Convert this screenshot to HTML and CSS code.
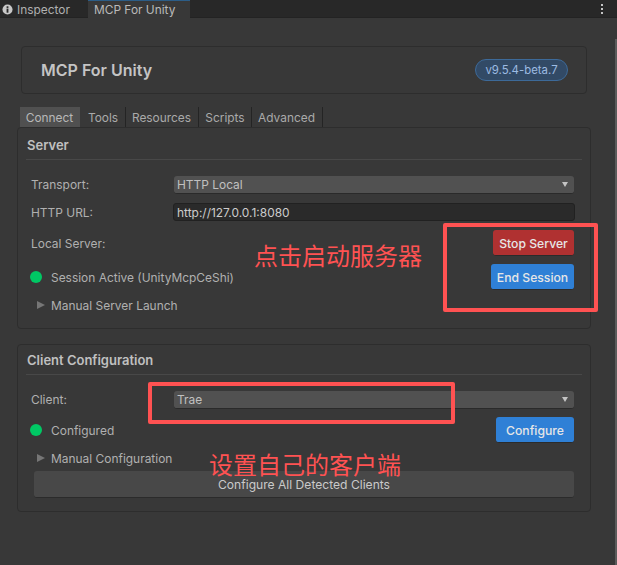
FILE: index.html
```html
<!DOCTYPE html>
<html lang="en">
<head>
<meta charset="utf-8">
<title>MCP For Unity</title>
<link rel="stylesheet" href="styles.css">
</head>
<body>
<div class="window">
  <div class="titlebar">
    <div class="dock-tab inspector">
      <svg class="info" viewBox="0 0 12 12" width="11" height="11"><circle cx="6" cy="6" r="5.5" fill="#c8c8c8"/><rect x="5" y="5" width="2" height="4.5" fill="#282828"/><rect x="5" y="2.5" width="2" height="1.8" fill="#282828"/></svg>
      <span>Inspector</span>
    </div>
    <div class="dock-tab active"><span>MCP For Unity</span></div>
    <div class="kebab"><i></i><i></i><i></i></div>
  </div>
  <div class="content">
    <div class="header-card">
      <div class="app-title">MCP For Unity</div>
      <div class="badge">v9.5.4-beta.7</div>
    </div>
    <div class="tabs">
      <div class="tab selected">Connect</div>
      <div class="tab t-tools">Tools</div>
      <div class="tab t-res">Resources</div>
      <div class="tab t-scr">Scripts</div>
      <div class="tab t-adv">Advanced</div>
    </div>
    <section class="panel server">
      <h2 class="panel-title">Server</h2>
      <div class="row r-transport">
        <div class="label">Transport:</div>
        <div class="select">HTTP Local<span class="caret"></span></div>
      </div>
      <div class="row r-url">
        <div class="label">HTTP URL:</div>
        <div class="input">http://127.0.0.1:8080</div>
      </div>
      <div class="row r-local">
        <div class="label">Local Server:</div>
        <div class="btn red">Stop Server</div>
      </div>
      <div class="row r-session">
        <div class="status"><span class="dot"></span>Session Active (UnityMcpCeShi)</div>
        <div class="btn blue">End Session</div>
      </div>
      <div class="foldout f-server"><span class="tri"></span>Manual Server Launch</div>
    </section>
    <section class="panel client">
      <h2 class="panel-title">Client Configuration</h2>
      <div class="row r-client">
        <div class="label">Client:</div>
        <div class="select">Trae<span class="caret"></span></div>
      </div>
      <div class="row r-configured">
        <div class="status"><span class="dot"></span>Configured</div>
        <div class="btn blue">Configure</div>
      </div>
      <div class="foldout f-client"><span class="tri"></span>Manual Configuration</div>
      <div class="wide-btn">Configure All Detected Clients</div>
    </section>
  </div>
  <div class="scrollbar"></div>
  <div class="mark box-server"></div>
  <div class="mark box-client"></div>
  <div class="note note-server">点击启动服务器</div>
  <div class="note note-client">设置自己的客户端</div>
</div>
</body>
</html>
```
FILE: styles.css
```css
* { box-sizing: border-box; }
html, body { margin: 0; padding: 0; }
body { width: 617px; height: 565px; overflow: hidden; background: #383838; font-family: Inter, "Noto Sans", sans-serif; font-size: 11.95px; color: #b4b4b4; }
.window { position: relative; width: 617px; height: 565px; background: #383838; }

.titlebar { display: flex; height: 18px; background: #282828; border-bottom: 1px solid #232323; }
.dock-tab { display: flex; align-items: center; height: 18px; font-size: 11.9px; color: #b0b0b0; }
.inspector { width: 88px; padding-left: 2px; gap: 4px; }
.info { flex: none; }
.dock-tab.active { width: 102px; padding-left: 6px; background: #383838; border-top: 1px solid #2c5d87; color: #bababa; }
.kebab { display: flex; flex-direction: column; gap: 2px; margin-left: auto; margin-right: 14px; padding-top: 4px; }
.kebab i { display: block; width: 2px; height: 2px; background: #c4c4c4; }

.content { display: flow-root; padding: 28px 26px 0 17px; }
.header-card { display: flex; align-items: center; justify-content: space-between; width: 566px; height: 48px; margin-left: 4px; padding: 0 18px 0 19px; background: #383838; border: 1px solid #2d2d2d; border-radius: 4px; }
.app-title { font-size: 16px; font-weight: 600; color: #c4c4c4; }
.badge { display: flex; align-items: center; justify-content: center; width: 93px; height: 22px; font-size: 11.4px; color: #9dbbe2; background: #324a66; border: 1px solid #3d6a99; border-radius: 11px; }

.tabs { display: flex; height: 20px; margin-top: 13px; margin-left: 3px; }
.tab { height: 20px; padding-top: 3px; text-align: center; font-size: 11.9px; color: #aaaaaa; border-right: 1px solid #242424; }
.tab.selected { width: 61px; padding-right: 1px; background: #505050; border-right-color: #383838; color: #b8b8b8; }
.t-tools { width: 45px; }
.t-res { width: 73px; padding-right: 1px; }
.t-scr { width: 53px; }
.t-adv { width: 71px; padding-right: 1px; }

.panel { width: 574px; padding: 0 9px; background: #383838; border: 1px solid #2d2d2d; border-radius: 4px; }
.server { height: 202px; }
.client { height: 168px; margin-top: 15px; }
.panel-title { width: 556px; height: 32px; margin: 0 0 0 -1px; padding: 9px 0 0 1px; font-size: 13px; line-height: 16px; font-weight: 600; color: #c0c0c0; border-bottom: 1px solid #484848; }
.client .panel-title { height: 30px; padding-top: 7px; }

.row { display: flex; align-items: center; justify-content: space-between; width: 547px; padding-left: 4px; }
.label { flex: none; width: 143px; color: #b0b0b0; }
.select { position: relative; flex: 1; height: 18px; padding: 0 3px; line-height: 17px; background: #515151; border-radius: 3px; color: #c0c0c0; border-bottom: 1px solid #2a2a2a; }
.caret { position: absolute; right: 6px; top: 6px; width: 0; height: 0; border-left: 3.5px solid transparent; border-right: 3.5px solid transparent; border-top: 5px solid #c4c4c4; }
.input { flex: 1; height: 18px; margin: 0 -1px; padding: 0 3px; line-height: 17px; background: #2a2a2a; border: 1px solid #212121; border-radius: 3px; color: #cccccc; }

.r-transport { margin-top: 16px; }
.r-transport .label, .r-client .label { padding-bottom: 2px; }
.r-url { margin-top: 9px; }
.r-local { margin-top: 9px; height: 26px; }
.r-session { margin-top: 8px; height: 26px; }
.r-client { margin-top: 16px; }
.r-configured { margin-top: 8px; height: 26px; }

.btn { display: flex; align-items: center; justify-content: center; height: 26px; padding-top: 1px; font-size: 12.2px; font-weight: 500; color: #e6e6e6; white-space: nowrap; border-radius: 3px; border-bottom: 1px solid #2b2b2b; }
.red { width: 81px; background: #b03131; }
.blue { min-width: 78px; padding: 1px 2px 0; background: #2f80d6; }
.r-session .blue { width: 83px; }

.status { display: flex; align-items: center; color: #b0b0b0; }
.dot { width: 12px; height: 12px; margin-right: 9px; margin-left: -1px; border-radius: 50%; background: #00c864; }

.foldout { display: flex; align-items: center; height: 16px; padding-left: 10px; color: #b0b0b0; }
.tri { width: 0; height: 0; margin-right: 6px; border-top: 4.5px solid transparent; border-bottom: 4.5px solid transparent; border-left: 8px solid #767676; }
.f-server { margin-top: 7px; }
.f-client { margin-top: 7px; }

.wide-btn { width: 540px; height: 27px; margin-top: 5px; margin-left: 7px; padding-top: 6px; text-align: center; font-size: 12.1px; line-height: 15px; color: #cacaca; background: #484848; border-radius: 3px; border-bottom: 1px solid #2b2b2b; }

.scrollbar { position: absolute; right: 0; top: 39px; width: 2px; height: 526px; background: #5b5b5b; }

.mark { position: absolute; border: 4px solid #ff5252; border-radius: 2px; }
.box-server { left: 443px; top: 223px; width: 155px; height: 89px; }
.box-client { left: 148px; top: 382px; width: 307px; height: 42px; }
.note { position: absolute; font-family: "Noto Sans CJK SC", sans-serif; font-size: 24px; line-height: 28px; color: #ff5252; white-space: nowrap; }
.note-server { left: 254px; top: 241px; }
.note-client { left: 209px; top: 450px; }
```
